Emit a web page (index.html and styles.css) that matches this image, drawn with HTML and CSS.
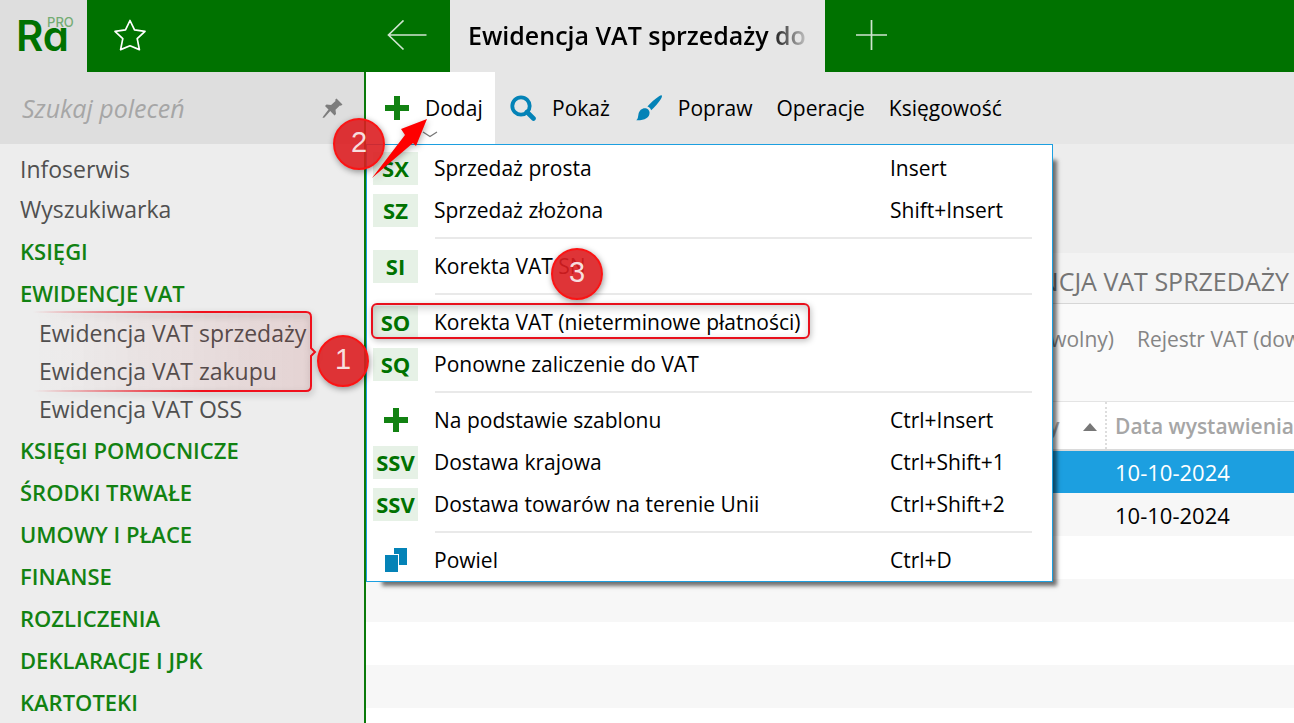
FILE: index.html
```html
<!DOCTYPE html>
<html lang="pl">
<head>
    <meta charset="UTF-8">
    <meta name="viewport" content="width=device-width, initial-scale=1.0">
    <title>Ewidencja VAT sprzedaży</title>
    <link rel="stylesheet" href="styles.css">
</head>
<body>

    <header class="topbar">
        <div class="logo">Ra<sup>PRO</sup></div>
        <button class="star" aria-label="Ulubione">
            <svg width="34" height="34" viewBox="0 0 34 34"><path d="M17 1.500l4.500 9.400 10.500 1.500-7.800 7.200 2.200 11L17 26.800l-9.400 3.800 2.200-11L2 12.400l10.500-1.500z" fill="none" stroke="#fff" stroke-width="1.700" stroke-linejoin="round"/></svg>
        </button>
        <button class="back" aria-label="Wstecz">
            <svg width="40" height="32" viewBox="0 0 40 32"><path d="M39.500 15H1.500M16.500.500L1.500 15l15 14.500" fill="none" stroke="#cfe4cf" stroke-width="1.700"/></svg>
        </button>
        <div class="tab"><span>Ewidencja VAT sprzedaży do</span></div>
        <button class="new-tab" aria-label="Nowa karta">
            <svg width="32" height="32" viewBox="0 0 32 32"><path d="M15.500 0v30M0 15h31" stroke="#cfe4cf" stroke-width="1.700"/></svg>
        </button>
    </header>

    <div class="layout">
        <aside class="sidebar">
            <div class="search">
                <input type="text" placeholder="Szukaj poleceń" aria-label="Szukaj poleceń">
                <button aria-label="Przypnij">
                    <svg width="22" height="22" viewBox="0 0 22 22"><path d="M14.500 1.500l6 6-1.600 1.200-1-.3-4.400 4.400.5 4.200-1.500 1.400-4.300-4.300L2.500 20.500l-2 .5.800-1.800 5.200-6.700L3 9l1.500-1.500 4.600.4 4.400-4-.3-1.200z" fill="#7d7d7d"/></svg>
                </button>
            </div>
            <nav>
                <a class="plain" href="#">Infoserwis</a>
                <a class="plain" href="#">Wyszukiwarka</a>
                <a class="group" href="#">KSIĘGI</a>
                <a class="group" href="#">EWIDENCJE VAT</a>
                <div class="sub">
                    <a href="#">Ewidencja VAT sprzedaży</a>
                    <a href="#">Ewidencja VAT zakupu</a>
                    <a href="#">Ewidencja VAT OSS</a>
                </div>
                <a class="group" href="#">KSIĘGI POMOCNICZE</a>
                <a class="group" href="#">ŚRODKI TRWAŁE</a>
                <a class="group" href="#">UMOWY I PŁACE</a>
                <a class="group" href="#">FINANSE</a>
                <a class="group" href="#">ROZLICZENIA</a>
                <a class="group" href="#">DEKLARACJE I JPK</a>
                <a class="group" href="#">KARTOTEKI</a>
            </nav>
        </aside>

        <main>
            <div class="toolbar">
                <div class="dropdown">
                    <button class="add">
                        <svg width="24" height="24" viewBox="0 0 24 24"><path d="M12 0v24M0 12h24" stroke="#128212" stroke-width="6"/></svg>
                        Dodaj
                        <svg class="chevron" width="16" height="7" viewBox="0 0 16 7"><path d="M1 1l7 4.500L15 1" fill="none" stroke="#777" stroke-width="1.300"/></svg>
                    </button>
                    <ul class="menu">
                        <li><button><b class="code">SX</b><span>Sprzedaż prosta</span><kbd>Insert</kbd></button></li>
                        <li><button><b class="code">SZ</b><span>Sprzedaż złożona</span><kbd>Shift+Insert</kbd></button></li>
                        <li class="line"></li>
                        <li><button><b class="code">SI</b><span>Korekta VAT SN</span></button></li>
                        <li class="line"></li>
                        <li><button><b class="code">SO</b><span>Korekta VAT (nieterminowe płatności)</span></button></li>
                        <li><button><b class="code">SQ</b><span>Ponowne zaliczenie do VAT</span></button></li>
                        <li class="line"></li>
                        <li><button><i class="icon"><svg width="24" height="24" viewBox="0 0 24 24"><path d="M12 0v24M0 12h24" stroke="#128212" stroke-width="6"/></svg></i><span>Na podstawie szablonu</span><kbd>Ctrl+Insert</kbd></button></li>
                        <li><button><b class="code">SSV</b><span>Dostawa krajowa</span><kbd>Ctrl+Shift+1</kbd></button></li>
                        <li><button><b class="code">SSV</b><span>Dostawa towarów na terenie Unii</span><kbd>Ctrl+Shift+2</kbd></button></li>
                        <li class="line"></li>
                        <li><button><i class="icon"><svg width="24" height="24" viewBox="0 0 24 24"><path d="M1 7h13v17H1zM10 0h13v17h-8V6h-5z" fill="#0483b7"/></svg></i><span>Powiel</span><kbd>Ctrl+D</kbd></button></li>
                    </ul>
                </div>
                <button>
                    <svg width="26" height="26" viewBox="0 0 26 26"><circle cx="11" cy="11" r="8.700" fill="none" stroke="#0483b7" stroke-width="3.800"/><path d="M17 17l6.500 6.500" stroke="#0483b7" stroke-width="4.600" stroke-linecap="round"/></svg>
                    Pokaż
                </button>
                <button>
                    <svg width="26" height="26" viewBox="0 0 26 26"><path d="M25.600.3c.8.700.2 2.300-.7 3.700-2.600 4-6.200 8.300-9.700 11.200-.9-2-2-3-3.800-3.600C14.500 7.800 19.500 3.500 23.400 1c.9-.5 1.700-1.100 2.200-.7zM9.800 13.300c2 .5 3.300 1.800 3.700 3.700.5 5.200-4.500 8.600-13.200 8.300 2-1.800 1.600-3.500 2.200-6.300.8-3.700 3.700-6.200 7.300-5.700z" fill="#0483b7"/></svg>
                    Popraw
                </button>
                <button>Operacje</button>
                <button>Księgowość</button>
            </div>
            <div class="spacer"></div>
            <h1>EWIDENCJA VAT SPRZEDAŻY</h1>
            <div class="filters">
                <span class="period">Okres (dowolny)</span>
                <span>Rejestr VAT (dowolny)</span>
            </div>
            <table>
                <thead>
                    <tr>
                        <th class="sorted">Wpisy <svg width="14" height="8" viewBox="0 0 14 8"><path d="M0 8l7-8 7 8z" fill="#777"/></svg></th>
                        <th>Data wystawienia</th>
                    </tr>
                </thead>
                <tbody>
                    <tr class="selected"><td></td><td>10-10-2024</td></tr>
                    <tr><td></td><td>10-10-2024</td></tr>
                    <tr><td></td><td></td></tr>
                    <tr><td></td><td></td></tr>
                    <tr><td></td><td></td></tr>
                    <tr><td></td><td></td></tr>
                    <tr><td></td><td></td></tr>
                </tbody>
            </table>
        </main>
    </div>

    <!-- oznaczenia kroków -->
    <svg class="bracket" width="290" height="90" viewBox="0 0 290 90">
        <defs>
            <linearGradient id="line"><stop offset="0" stop-color="#e8101c" stop-opacity="0"/><stop offset=".6" stop-color="#f0101c"/></linearGradient>
            <linearGradient id="fill"><stop offset="0" stop-color="#d02020" stop-opacity="0"/><stop offset="1" stop-color="#d02020" stop-opacity=".1"/></linearGradient>
        </defs>
        <path d="M2 2H275q5 0 5 5V38l4 4-4 4V76q0 5-5 5H2" fill="url(#fill)" stroke="url(#line)" stroke-width="2"/>
    </svg>
    <div class="frame"></div>
    <span class="step step-1">1</span>
    <span class="step step-2">2</span>
    <span class="step step-3">3</span>
    <svg class="arrow" width="60" height="64" viewBox="0 0 60 64"><path d="M57 3L46 30l-3-3L2 62 35 19l-4-6z" fill="#fe0000"/></svg>

</body>
</html>
```
FILE: styles.css
```css
* { box-sizing: border-box; }
body { margin: 0; height: 100vh; overflow: hidden; display: flex; flex-direction: column; position: relative; font-family: "Open Sans", "Noto Sans", sans-serif; font-size: 21px; color: #000; background: #fff; }
button { font: inherit; color: inherit; background: none; border: none; padding: 0; cursor: pointer; }
svg { display: block; flex: none; }
a { text-decoration: none; }

.topbar { display: flex; align-items: center; height: 72px; flex: none; background: #007200; }
.logo { display: flex; width: 87px; height: 72px; padding: 8px 0 0 16px; background: #dedede; color: #007200; font-family: Inter, sans-serif; font-feature-settings: "cv11"; font-size: 42px; font-weight: 600; line-height: 56px; }
.logo sup { margin-left: -22px; font-size: 13px; font-weight: 500; line-height: 28px; color: #74ac74; }
.star { margin-left: 26px; }
.back { margin-left: 240px; }
.tab { width: 375px; height: 72px; margin-left: 23px; padding: 0 18px; background: #e6e6e6; font-size: 25px; font-weight: 600; line-height: 70px; }
.tab span { display: block; white-space: nowrap; -webkit-mask-image: linear-gradient(to right, #000 300px, transparent 345px); mask-image: linear-gradient(to right, #000 300px, transparent 345px); }
.new-tab { margin-left: 31px; }

.layout { display: flex; flex: 1; min-height: 0; }
.sidebar { width: 366px; flex: none; background: #ededed; border-right: 2px solid #0a7a0a; }
.search { display: flex; align-items: center; justify-content: space-between; height: 72px; padding: 0 20px 0 22px; background: #dedede; }
.search input { width: 240px; padding: 0; border: none; outline: none; background: none; font: italic 25px "Open Sans", "Noto Sans", sans-serif; }
.search input::placeholder { color: #a6a6a6; opacity: 1; }
nav { padding-top: 6px; white-space: nowrap; }
nav a { display: block; padding-left: 20px; color: #505050; font-size: 23px; line-height: 38px; }
nav .plain { height: 40px; }
nav .group { color: #128212; font-size: 22px; font-weight: 600; line-height: 42px; }
.sub { padding-bottom: 1px; }
.sub a { padding-left: 39px; line-height: 38px; }

main { flex: 1; min-width: 0; display: flex; flex-direction: column; overflow: hidden; }
.toolbar { display: flex; flex: none; height: 72px; background: #e6e6e6; }
.toolbar > button, .add { display: flex; align-items: center; gap: 16px; height: 72px; padding: 0 12px; }
.add { position: relative; width: 129px; padding: 0 0 0 19px; background: #fff; }
.toolbar > .dropdown + button { padding-left: 15px; padding-right: 14px; }
.dropdown { position: relative; }
.chevron { position: absolute; left: 56px; bottom: 6px; }
.menu { position: absolute; left: 0; top: 72px; z-index: 2; width: 687px; margin: 0; padding: 2px 0 0; list-style: none; background: #fff; border: 1px solid #1c9fe0; box-shadow: 10px 10px 4px -6px rgba(0,0,0,0.55); }
.menu button { display: grid; grid-template-columns: 45px 440px 1fr; column-gap: 16px; align-items: center; width: 100%; height: 42px; padding-left: 6px; text-align: left; white-space: nowrap; }
.menu kbd { font: inherit; }
.code { height: 33px; background: #e6f1e6; color: #007200; font-size: 22px; line-height: 32px; text-align: center; }
.icon { display: flex; justify-content: center; }
.line { height: 14px; padding-top: 6px; }
.line::before { content: ""; display: block; height: 2px; margin: 0 20px 0 68px; background: #e9e9e9; }

.spacer { flex: none; height: 109px; background: #ededed; }
h1 { flex: none; height: 51px; margin: 0; padding-right: 5px; background: #f3f3f3; border-bottom: 1px solid #d6d6d6; color: #757575; font-size: 25px; font-weight: 400; line-height: 56px; text-align: right; }
.filters { display: flex; flex: none; gap: 23px; height: 98px; background: #fafafa; border-bottom: 1px solid #e4e4e4; color: #858585; line-height: 70px; white-space: nowrap; }
.period { flex: none; width: 748px; text-align: right; }
table { width: 100%; border-collapse: collapse; table-layout: fixed; white-space: nowrap; }
th { height: 48px; padding: 0 0 0 8px; border-bottom: 2px solid #dadada; color: #a6a6a6; font-weight: 600; text-align: left; }
th + th { border-left: 2px dotted #ddd; }
.sorted { width: 740px; padding-right: 8px; text-align: right; }
.sorted svg { display: inline-block; margin-left: 18px; vertical-align: 3px; }
td { height: 43px; padding: 0 0 0 9px; font-size: 22px; line-height: 42px; }
tbody tr:nth-child(even) { background: #f7f7f7; }
tbody .selected { background: #1c9fe0; color: #fff; }

/* oznaczenia */
.bracket, .frame, .step, .arrow { position: absolute; z-index: 3; pointer-events: none; }
.bracket { left: 31px; top: 310px; filter: drop-shadow(1px 3px 3px rgba(0,0,0,0.3)); }
.frame { left: 371px; top: 303px; width: 439px; height: 36px; border: 2px solid #e8101c; border-radius: 6px; box-shadow: 1px 2px 6px rgba(0,0,0,0.25), inset 1px 3px 8px rgba(0,0,0,0.2); }
.step { width: 52px; height: 52px; border: 2px solid #fa1414; border-radius: 50%; background: rgba(220,30,33,0.9); color: #f7dede; font-family: "Liberation Sans", Arial, sans-serif; font-size: 29px; line-height: 44px; text-align: center; box-shadow: 1px 2px 6px rgba(0,0,0,0.4); }
.step-1 { left: 317px; top: 335px; }
.step-2 { left: 333px; top: 118px; }
.step-3 { left: 551px; top: 248px; }
.arrow { left: 370px; top: 116px; filter: drop-shadow(1px 2px 3px rgba(0,0,0,0.3)); }
```
